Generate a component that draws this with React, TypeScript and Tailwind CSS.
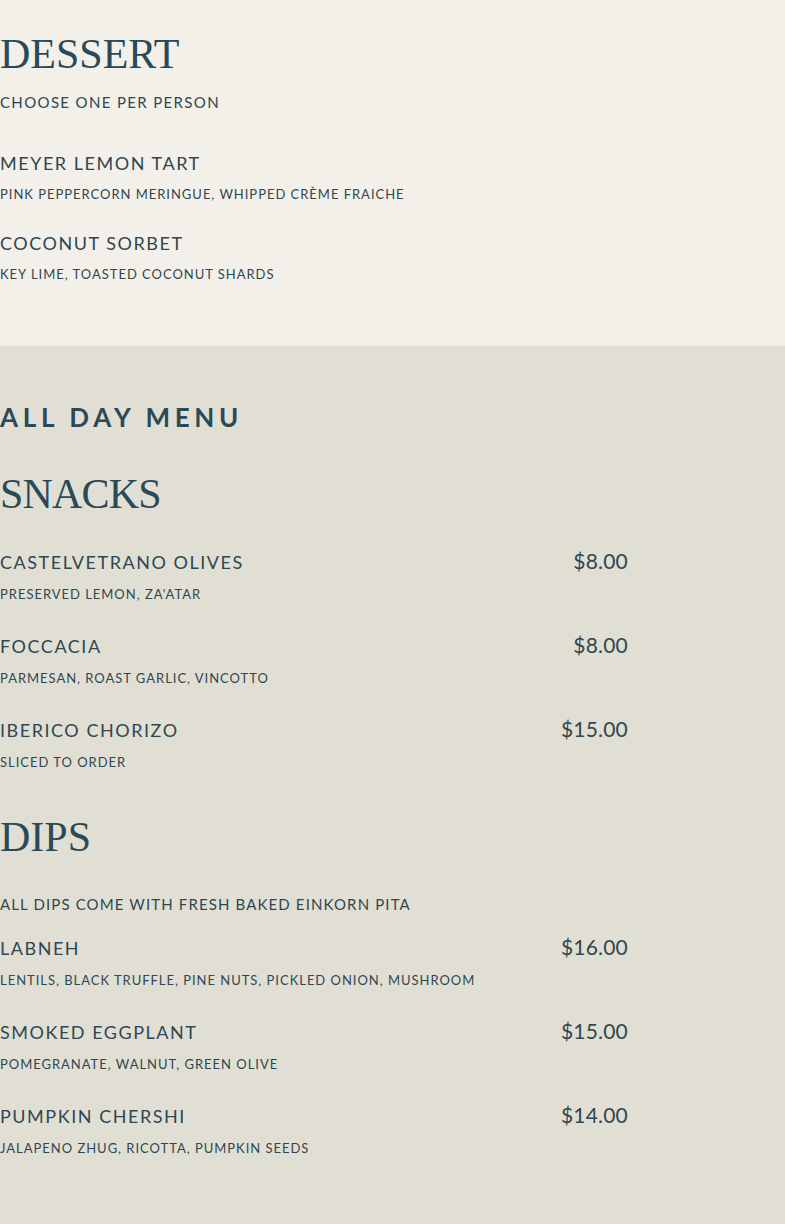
import React from 'react';

type Item = { name: string; desc: string; price?: string };

const desserts: Item[] = [
  { name: 'Meyer Lemon Tart', desc: 'Pink Peppercorn Meringue, Whipped Crème Fraiche' },
  { name: 'Coconut Sorbet', desc: 'Key Lime, Toasted Coconut Shards' },
];

const snacks: Item[] = [
  { name: 'Castelvetrano Olives', desc: "Preserved Lemon, Za'atar", price: '$8.00' },
  { name: 'Foccacia', desc: 'Parmesan, Roast Garlic, Vincotto', price: '$8.00' },
  { name: 'Iberico Chorizo', desc: 'Sliced to Order', price: '$15.00' },
];

const dips: Item[] = [
  { name: 'Labneh', desc: 'Lentils, Black Truffle, Pine Nuts, Pickled Onion, Mushroom', price: '$16.00' },
  { name: 'Smoked Eggplant', desc: 'Pomegranate, Walnut, Green Olive', price: '$15.00' },
  { name: 'Pumpkin Chershi', desc: 'Jalapeno Zhug, Ricotta, Pumpkin Seeds', price: '$14.00' },
];

const sans = "font-['Lato','Open_Sans',sans-serif]";
const serif = "font-['Liberation_Serif','DejaVu_Serif',serif]";

const Heading = ({ children, className = '' }: { children: React.ReactNode; className?: string }) => (
  <h2 className={`${serif} text-[42px] leading-[48px] uppercase text-[#2b4a58] ${className}`}>{children}</h2>
);

const MenuItem = ({ item }: { item: Item }) => (
  <div className="flex flex-col gap-[11px]">
    <div className="flex items-baseline justify-between">
      <h3 className="text-[18px] leading-[24px] uppercase tracking-[0.085em]">{item.name}</h3>
      {item.price && <span className="text-[21px] leading-[24px] tracking-[0.01em]">{item.price}</span>}
    </div>
    <p className="text-[13px] leading-[18px] uppercase tracking-[0.075em]">{item.desc}</p>
  </div>
);

export default function App() {
  return (
    <div className={`${sans} text-[#2f4752] min-h-[1224px] bg-[#e1dfd3]`}>
      {/* Dessert */}
      <section className="bg-[#f3f0e9] pt-[30px] pb-[63px] border-b border-[#dedbcf]">
        <div className="w-[628px]">
          <Heading>Dessert</Heading>
          <p className="mt-[14px] text-[15px] leading-[20px] uppercase tracking-[0.09em]">Choose one per person</p>
          <div className="mt-[39px] flex flex-col gap-[28px]">
            {desserts.map((d) => (
              <div key={d.name} className="flex flex-col gap-[10px]">
                <h3 className="text-[18px] leading-[24px] uppercase tracking-[0.085em]">{d.name}</h3>
                <p className="text-[13px] leading-[18px] uppercase tracking-[0.075em]">{d.desc}</p>
              </div>
            ))}
          </div>
        </div>
      </section>

      {/* All day menu */}
      <section className="pt-[54px] pb-[60px]">
        <div className="w-[628px]">
          <h2 className="text-[26px] leading-[32px] font-bold uppercase tracking-[0.18em] text-[#2b4a58]">All Day Menu</h2>

          <Heading className="mt-[37px] tracking-[-0.02em]">Snacks</Heading>
          <div className="mt-[31px] flex flex-col gap-[30px]">
            {snacks.map((s) => (
              <MenuItem key={s.name} item={s} />
            ))}
          </div>

          <Heading className="mt-[42px]">Dips</Heading>
          <p className="mt-[33px] text-[15px] leading-[20px] uppercase tracking-[0.075em]">All dips come with fresh baked einkorn pita</p>
          <div className="mt-[21px] flex flex-col gap-[30px]">
            {dips.map((d) => (
              <MenuItem key={d.name} item={d} />
            ))}
          </div>
        </div>
      </section>
    </div>
  );
}
